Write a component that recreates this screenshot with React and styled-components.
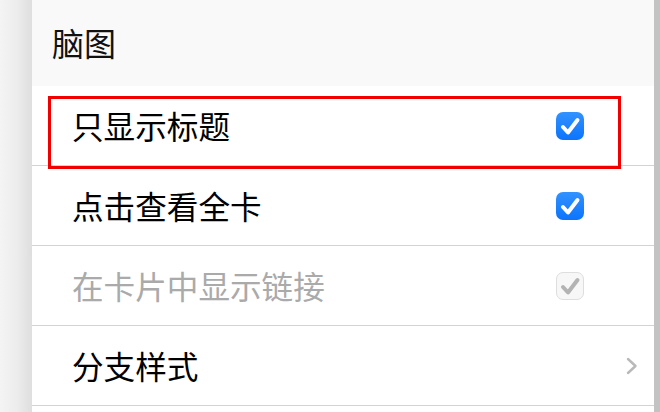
import React from 'react'
import styled, { createGlobalStyle } from 'styled-components'

const GlobalStyle = createGlobalStyle`
  html, body { margin: 0; padding: 0; background: #fff; overflow: hidden; }
  body { font-family: "Noto Sans CJK SC", "Noto Sans", sans-serif; }
`

const Page = styled.div`
  display: flex;
  width: 660px;
  height: 412px;
  overflow: hidden;
`

const Gutter = styled.div`
  width: 32px;
  flex-shrink: 0;
  background: linear-gradient(to right, #f4f4f4 0%, #ececec 55%, #dedede 100%);
`

const Panel = styled.div`
  flex: 1;
  display: flex;
  flex-direction: column;
  background: #fff;
`

const Scrollbar = styled.div`
  width: 6px;
  flex-shrink: 0;
  background: #c3c3c3;
`

const Header = styled.div`
  height: 86px;
  flex-shrink: 0;
  display: flex;
  align-items: center;
  padding-left: 20px;
  padding-bottom: 2px;
  box-sizing: border-box;
  background: #f9f9f9;
  font-size: 32px;
  line-height: 1;
  color: #111;
`

const Row = styled.div`
  position: relative;
  height: 80px;
  flex-shrink: 0;
  box-sizing: border-box;
  display: flex;
  align-items: center;
  padding: 0 15px 0 40px;
  border-bottom: 1px solid #d3d3d3;
`

const Label = styled.span`
  flex: 1;
  font-size: 31.6px;
  line-height: 1;
  color: ${p => (p.disabled ? '#aaaaaa' : '#000')};
`

const Box = styled.span`
  width: 28px;
  height: 28px;
  margin-right: 55px;
  border-radius: 7px;
  box-sizing: border-box;
  display: flex;
  align-items: center;
  justify-content: center;
  background: ${p => (p.disabled ? '#f7f7f7' : 'linear-gradient(#3292ff, #0a74fb)')};
  border: ${p => (p.disabled ? '1px solid #dedede' : 'none')};
`

const Highlight = styled.div`
  position: absolute;
  left: 16px;
  top: 10px;
  width: 573px;
  height: 73px;
  box-sizing: border-box;
  border: 3px solid #f20000;
  pointer-events: none;
`

const Check = ({ disabled }) => (
  <Box disabled={disabled}>
    <svg width="28" height="28" viewBox="0 0 28 28" style={{ flexShrink: 0 }}>
      <path
        d="M7 15 L12 20.5 L21.5 8"
        fill="none"
        stroke={disabled ? '#b3b3b3' : '#fff'}
        strokeWidth="4"
        strokeLinecap="round"
        strokeLinejoin="round"
      />
    </svg>
  </Box>
)

const Chevron = () => (
  <svg width="14" height="18" viewBox="0 0 14 18">
    <path d="M3 2 L10.5 9 L3 16" fill="none" stroke="#b9b9b9" strokeWidth="2.4" strokeLinecap="round" strokeLinejoin="round" />
  </svg>
)

const App = () => {
  return (
    <Page>
      <GlobalStyle />
      <Gutter />
      <Panel>
        <Header>脑图</Header>
        <Row>
          <Label>只显示标题</Label>
          <Check />
          <Highlight />
        </Row>
        <Row>
          <Label>点击查看全卡</Label>
          <Check />
        </Row>
        <Row>
          <Label disabled>在卡片中显示链接</Label>
          <Check disabled />
        </Row>
        <Row>
          <Label>分支样式</Label>
          <Chevron />
        </Row>
      </Panel>
      <Scrollbar />
    </Page>
  )
}

export default App
